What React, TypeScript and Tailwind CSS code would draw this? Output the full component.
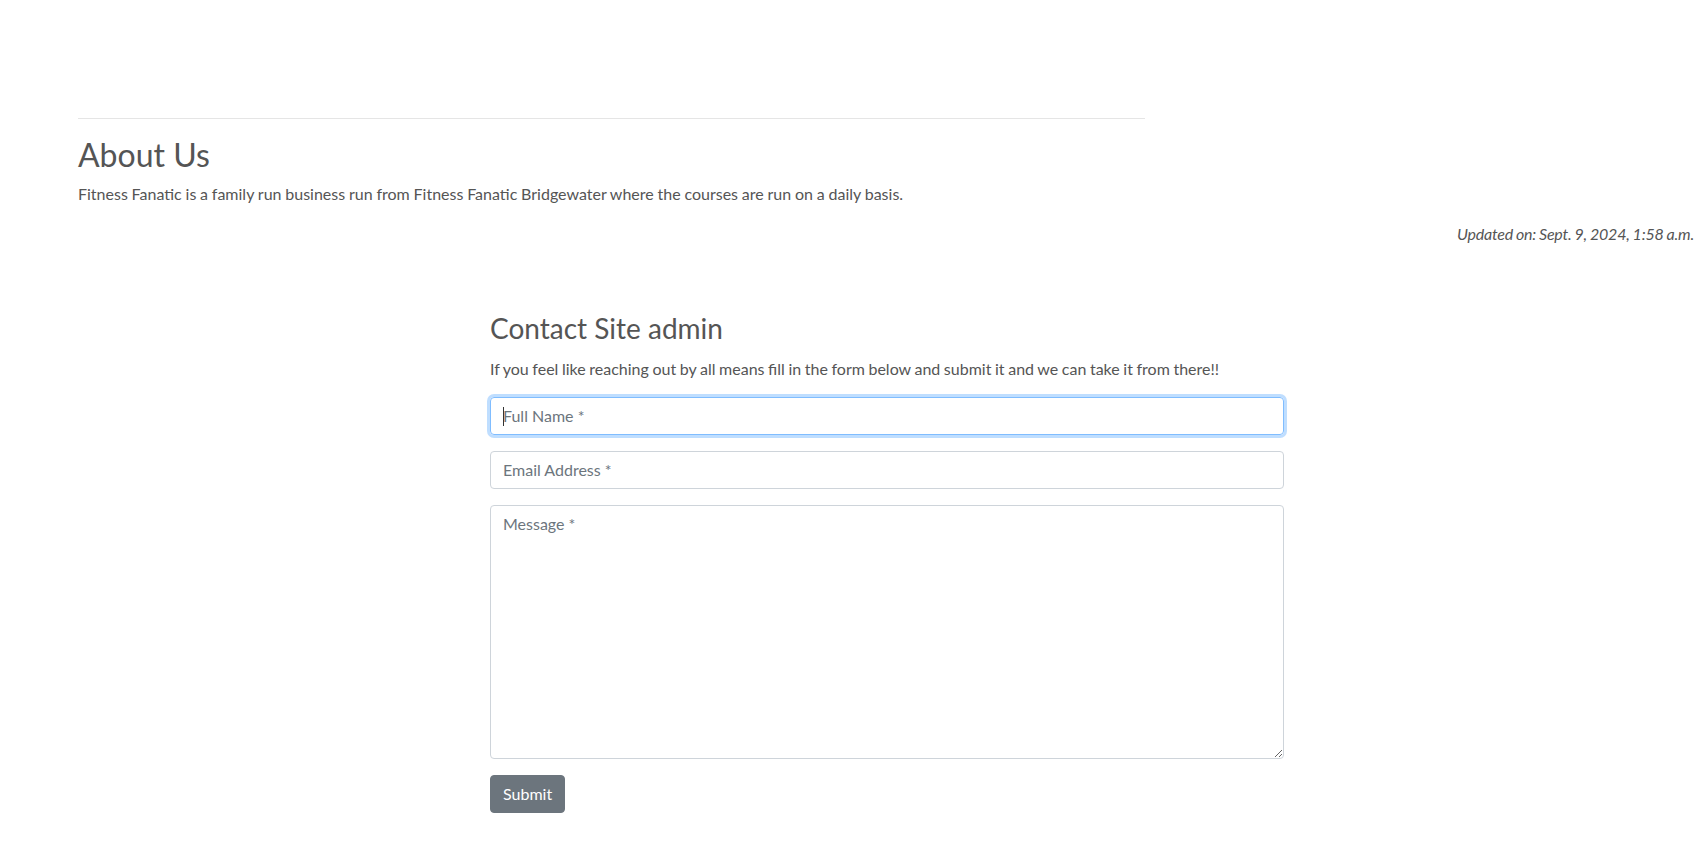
import React from 'react';

export default function App() {
  return (
    <div className="min-h-screen bg-white font-['Lato','Liberation_Sans',sans-serif] text-[16px] leading-6 text-[#555]">
      {/* About */}
      <div className="pt-[118px] pl-[78px] w-[1145px]">
        <hr className="border-0 border-t border-[#e5e5e5] m-0" />
        <h2 className="mt-[17px] mb-2 text-[32px] leading-[1.2] font-normal">About Us</h2>
        <p className="m-0 [word-spacing:-0.3px]">
          Fitness Fanatic is a family run business run from Fitness Fanatic Bridgewater where the courses are run on a daily basis.
        </p>
      </div>
      <p className="mt-4 mb-0 pr-[11px] text-right italic tracking-[-0.2px] [word-spacing:-0.6px]">
        Updated on: Sept. 9, 2024, 1:58 a.m.
      </p>

      {/* Contact */}
      <div className="ml-[490px] w-[794px] mt-[66px]">
        <h3 className="m-0 mb-[11px] text-[28px] leading-[1.2] font-normal">Contact Site admin</h3>
        <p className="m-0 mb-4 [word-spacing:-0.5px]">
          If you feel like reaching out by all means fill in the form below and submit it and we can take it from there!!
        </p>
        <form className="flex flex-col" onSubmit={e => e.preventDefault()}>
          <div className="relative mb-4">
            <input
              type="text"
              placeholder="Full Name *"
              className="block w-full h-[38px] px-3 rounded border border-[#80bdff] shadow-[0_0_0_3px_rgba(0,123,255,0.25)] outline-none placeholder:text-[#6c757d] text-[#495057]"
            />
            <span className="absolute left-[13px] top-[10px] h-[19px] w-px bg-[#333]" />
          </div>
          <input
            type="email"
            placeholder="Email Address *"
            className="block w-full h-[38px] px-3 mb-4 rounded border border-[#ced4da] outline-none placeholder:text-[#6c757d] text-[#495057]"
          />
          <textarea
            rows={10}
            placeholder="Message *"
            className="block w-full h-[254px] px-3 py-1.5 mb-4 rounded border border-[#ced4da] outline-none placeholder:text-[#6c757d] text-[#495057]"
          />
          <div>
            <button
              type="submit"
              className="h-[38px] px-3 rounded bg-[#6c757d] border border-[#6c757d] text-white"
            >
              Submit
            </button>
          </div>
        </form>
      </div>
    </div>
  );
}
